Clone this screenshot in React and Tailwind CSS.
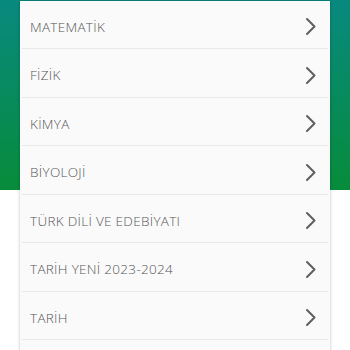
import React from 'react';

const subjects = [
  'MATEMATİK',
  'FİZİK',
  'KİMYA',
  'BİYOLOJİ',
  'TÜRK DİLİ VE EDEBİYATI',
  'TARİH YENİ 2023-2024',
  'TARİH',
];

const Chevron = () => (
  <svg width="12" height="19" viewBox="0 0 12 19" fill="none">
    <path d="M2 2l7.5 7.5L2 17" stroke="#5f5f5f" strokeWidth="2" strokeLinecap="round" strokeLinejoin="round" />
  </svg>
);

export default function App() {
  return (
    <div className="h-[350px] overflow-hidden bg-white bg-[linear-gradient(to_bottom,#08897f,#078c3b)] bg-no-repeat bg-[length:100%_190px] font-['Open_Sans','Liberation_Sans',sans-serif]">
      <div className="mx-[20px] mt-[0.5px] bg-[#fafafa] shadow-[0_0_3px_rgba(0,0,0,0.25)]">
        {subjects.map((s) => (
          <div key={s} className="mx-[2px] flex h-[48.5px] items-center justify-between border-b border-[#e9e9e9] pt-[5px] pl-[8px] pr-[11px]">
            <span className="text-[13.5px] font-light tracking-[0.3px] text-[#555]">{s}</span>
            <Chevron />
          </div>
        ))}
        <div className="h-[48.5px]" />
      </div>
    </div>
  );
}
